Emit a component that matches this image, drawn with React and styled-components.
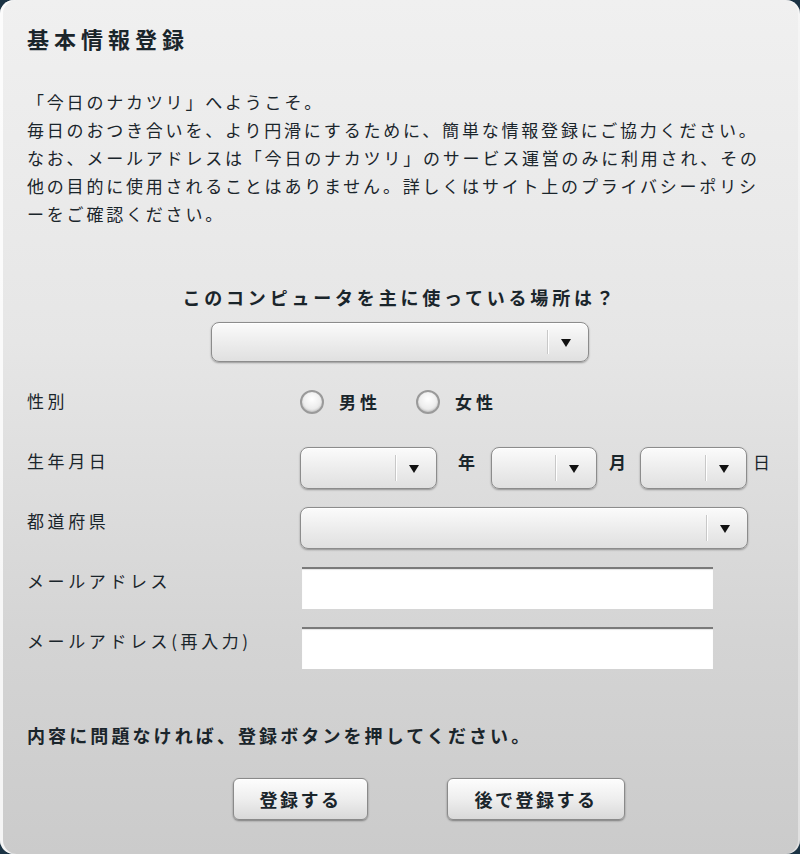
import React from 'react';
import styled, { createGlobalStyle } from 'styled-components';

const GlobalStyle = createGlobalStyle`
  html, body {
    margin: 0;
    padding: 0;
    background: #1b3344;
  }
  body {
    font-family: "Noto Sans CJK JP", "Noto Sans", sans-serif;
    color: #1a252b;
  }
`;

const Panel = styled.div`
  box-sizing: border-box;
  width: 800px;
  height: 854px;
  border-radius: 14px;
  padding: 23px 27px 0;
  background: linear-gradient(#f0f0f0 0%, #e6e6e6 40%, #d4d4d4 75%, #cbcbcb 100%);
  box-shadow: inset 3px 0 0 rgba(255, 255, 255, 0.8), inset -2px 0 0 rgba(255, 255, 255, 0.4);
`;

const Title = styled.h1`
  margin: 0;
  font-size: 22px;
  line-height: 30px;
  font-weight: 700;
  letter-spacing: 5px;
`;

const Intro = styled.p`
  margin: 35px 0 0;
  font-size: 17px;
  line-height: 28px;
  letter-spacing: 2.8px;
  white-space: nowrap;
`;

const Question = styled.div`
  margin-top: 55px;
  display: flex;
  flex-direction: column;
  align-items: center;
`;

const QuestionText = styled.div`
  font-size: 18px;
  line-height: 28px;
  font-weight: 700;
  letter-spacing: 3.8px;
  margin-bottom: 11px;
`;

const Select = styled.div`
  box-sizing: border-box;
  position: relative;
  width: ${p => p.$w}px;
  height: ${p => p.$h || 42}px;
  border: 1.5px solid #8c8c8c;
  border-radius: 8px;
  background: linear-gradient(#fbfbfb, #ededed 50%, #e0e0e0);
  box-shadow: 0 1px 2px rgba(0, 0, 0, 0.35), inset 0 1px 0 #fff;
  flex-shrink: 0;
`;

const Divider = styled.span`
  position: absolute;
  right: 40px;
  top: 7px;
  bottom: 7px;
  width: 1px;
  background: #c8c8c8;
  box-shadow: 1px 0 0 #fff;
`;

const Arrow = styled.span`
  position: absolute;
  right: 17px;
  top: 50%;
  margin-top: -3px;
  width: 0;
  height: 0;
  border-left: 5px solid transparent;
  border-right: 5px solid transparent;
  border-top: 8px solid #111;
`;

const Dropdown = ({ w, h }) => (
  <Select $w={w} $h={h}>
    <Divider />
    <Arrow />
  </Select>
);

const Form = styled.div`
  margin-top: 25px;
  display: grid;
  grid-template-columns: 273px 1fr;
  grid-auto-rows: 42px;
  row-gap: 18px;
`;

const Label = styled.div`
  font-size: 17px;
  line-height: 28px;
  letter-spacing: 3.6px;
  white-space: nowrap;
`;

const FieldRow = styled.div`
  display: flex;
  align-items: ${p => (p.$top ? 'flex-start' : 'center')};
  padding-top: ${p => p.$pt || 0}px;
`;

const Radio = styled.span`
  box-sizing: border-box;
  width: 24px;
  height: 24px;
  border-radius: 50%;
  border: 2px solid #9a9a9a;
  background: radial-gradient(circle at 50% 35%, #ffffff 0%, #ececec 60%, #d4d4d4 100%);
  box-shadow: inset 0 -1px 2px rgba(0, 0, 0, 0.15);
  margin-right: 15px;
`;

const RadioText = styled.span`
  font-size: 17px;
  line-height: 24px;
  font-weight: 700;
  letter-spacing: 4px;
  margin-right: 35px;
`;

const Unit = styled.span`
  align-self: flex-start;
  font-size: 17px;
  line-height: 30px;
  font-weight: ${p => (p.$bold ? 700 : 400)};
  margin: 0 ${p => p.$mr}px 0 ${p => p.$ml}px;
`;

const TextInput = styled.input`
  box-sizing: border-box;
  width: 411px;
  height: 42px;
  margin: 0 0 0 2px;
  border: none;
  border-top: 2px solid #7a7a7a;
  background: #fff;
  outline: none;
  box-shadow: inset 0 1px 1px rgba(0, 0, 0, 0.1);
`;

const Note = styled.p`
  margin: 52px 0 0;
  font-size: 18px;
  line-height: 28px;
  font-weight: 700;
  letter-spacing: 3.1px;
  white-space: nowrap;
`;

const Buttons = styled.div`
  margin-top: 29px;
  padding-left: 206px;
  display: flex;
  gap: 79px;
`;

const Button = styled.button`
  box-sizing: border-box;
  width: ${p => p.$w}px;
  height: 42px;
  border: 1px solid #8a8a8a;
  border-radius: 6px;
  background: linear-gradient(#fdfdfd, #eeeeee 50%, #d9d9d9);
  box-shadow: 0 1px 2px rgba(0, 0, 0, 0.4), inset 0 1px 0 #fff;
  font-family: "Noto Sans CJK JP", sans-serif;
  font-size: 18px;
  font-weight: 700;
  letter-spacing: 2.5px;
  color: #1a252b;
  padding: 0;
`;

export default function App() {
  return (
    <>
      <GlobalStyle />
      <Panel>
        <Title>基本情報登録</Title>
        <Intro>
          「今日のナカツリ」へようこそ。<br />
          毎日のおつき合いを、より円滑にするために、簡単な情報登録にご協力ください。<br />
          なお、メールアドレスは「今日のナカツリ」のサービス運営のみに利用され、その<br />
          他の目的に使用されることはありません。詳しくはサイト上のプライバシーポリシ<br />
          ーをご確認ください。
        </Intro>

        <Question>
          <QuestionText>このコンピュータを主に使っている場所は？</QuestionText>
          <Dropdown w={378} h={40} />
        </Question>

        <Form>
          <Label>性別</Label>
          <FieldRow $top $pt={3}>
            <Radio />
            <RadioText>男性</RadioText>
            <Radio />
            <RadioText>女性</RadioText>
          </FieldRow>

          <Label>生年月日</Label>
          <FieldRow>
            <Dropdown w={137} />
            <Unit $bold $ml={21} $mr={16}>年</Unit>
            <Dropdown w={106} />
            <Unit $bold $ml={12} $mr={14}>月</Unit>
            <Dropdown w={107} />
            <Unit $ml={6} $mr={0}>日</Unit>
          </FieldRow>

          <Label>都道府県</Label>
          <FieldRow>
            <Dropdown w={448} />
          </FieldRow>

          <Label>メールアドレス</Label>
          <FieldRow>
            <TextInput type="text" />
          </FieldRow>

          <Label>メールアドレス(再入力)</Label>
          <FieldRow>
            <TextInput type="text" />
          </FieldRow>
        </Form>

        <Note>内容に問題なければ、登録ボタンを押してください。</Note>

        <Buttons>
          <Button $w={135}>登録する</Button>
          <Button $w={178}>後で登録する</Button>
        </Buttons>
      </Panel>
    </>
  );
}
